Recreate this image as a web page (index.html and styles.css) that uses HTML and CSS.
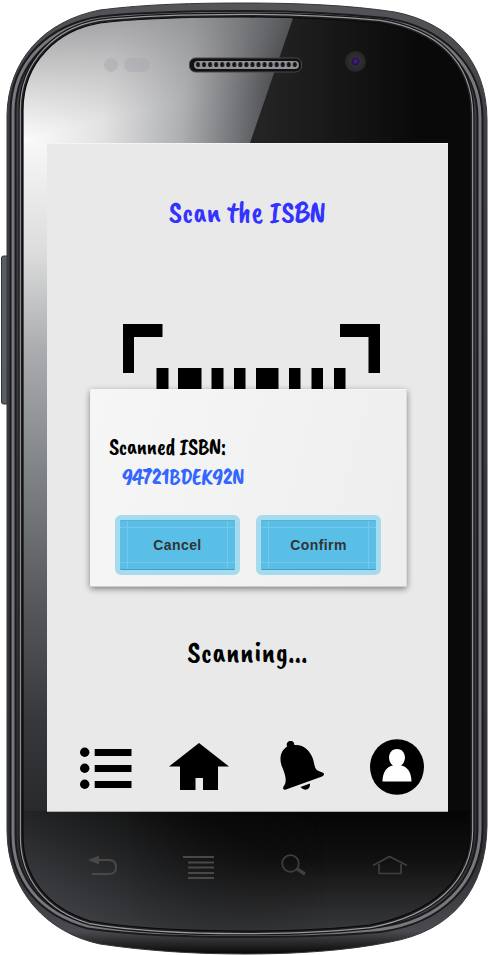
FILE: index.html
```html
<!DOCTYPE html>
<html lang="en">
<head>
<meta charset="utf-8">
<title>Scan the ISBN</title>
<link rel="stylesheet" href="styles.css">
</head>
<body>
<main class="phone">
  <svg class="shell" viewBox="0 0 490 955" aria-hidden="true">
    <defs>
      <linearGradient id="shine" x1="23" y1="130" x2="285" y2="155" gradientUnits="userSpaceOnUse">
        <stop offset="0" stop-color="#fcfcfc"/><stop offset=".3" stop-color="#e2e2e3"/><stop offset=".6" stop-color="#aeafb1"/><stop offset=".86" stop-color="#626468"/><stop offset="1" stop-color="#3c3d41"/>
      </linearGradient>
      <linearGradient id="topShade" x1="120" y1="10" x2="145" y2="110" gradientUnits="userSpaceOnUse">
        <stop offset="0" stop-color="#707174" stop-opacity=".6"/><stop offset="1" stop-color="#888" stop-opacity="0"/>
      </linearGradient>
      <linearGradient id="left" x1="0" y1="143" x2="0" y2="830" gradientUnits="userSpaceOnUse">
        <stop offset="0" stop-color="#f7f7f7"/><stop offset=".16" stop-color="#dcdcdc"/><stop offset=".3" stop-color="#aaacaf"/><stop offset=".48" stop-color="#808386"/><stop offset=".66" stop-color="#585a5d"/><stop offset=".84" stop-color="#37383c"/><stop offset=".98" stop-color="#27282a"/>
      </linearGradient>
      <linearGradient id="base" x1="90" y1="935" x2="155" y2="795" gradientUnits="userSpaceOnUse">
        <stop offset="0" stop-color="#414347"/><stop offset=".5" stop-color="#252628"/><stop offset="1" stop-color="#0c0c0c"/>
      </linearGradient>
      <linearGradient id="baseRight" x1="0" y1="811" x2="0" y2="931" gradientUnits="userSpaceOnUse">
        <stop offset="0" stop-color="#050505"/><stop offset=".4" stop-color="#101010"/><stop offset="1" stop-color="#38393b"/>
      </linearGradient>
      <linearGradient id="dark" x1="260" y1="0" x2="420" y2="0" gradientUnits="userSpaceOnUse">
        <stop offset="0" stop-color="#242424"/><stop offset="1" stop-color="#090909"/>
      </linearGradient>
      <linearGradient id="edge" x1="0" y1="0" x2="0" y2="955" gradientUnits="userSpaceOnUse">
        <stop offset="0" stop-color="#55565a"/><stop offset=".1" stop-color="#424246"/><stop offset=".9" stop-color="#303034"/><stop offset=".975" stop-color="#4a4a50"/><stop offset="1" stop-color="#050505"/>
      </linearGradient>
      <linearGradient id="reveal" x1="130" y1="0" x2="330" y2="0" gradientUnits="userSpaceOnUse">
        <stop offset="0" stop-color="#fff" stop-opacity="0"/><stop offset="1" stop-color="#fff"/>
      </linearGradient>
      <mask id="rightMask" maskUnits="userSpaceOnUse" x="0" y="800" width="490" height="155"><path d="M0 800H490V955H0Z" fill="url(#reveal)"/></mask>
      <radialGradient id="lens"><stop offset="0" stop-color="#4920a0"/><stop offset=".3" stop-color="#231544"/><stop offset=".45" stop-color="#303032"/><stop offset="1" stop-color="#252526"/></radialGradient>
      <pattern id="holes" x="195" y="60" width="6.05" height="9" patternUnits="userSpaceOnUse">
        <rect width="6.05" height="9" fill="#929296"/><ellipse cx="3" cy="4.5" rx="2" ry="2.6" fill="#151517"/>
      </pattern>
      <path id="glass" d="M23 110C23 62 58 30 100 23C142 18 195 17 245 17C295 17 338 19 380 23C434 32 470 62 470 115V830C470 880 432 913 370 925C325 930 285 931 245 931C185 931 130 928 90 921C48 908 23 878 23 836Z"/>
      <path id="rim" d="M13 112C13 60 52 27 100 19C145 14 195 13.500 245 13.500C297 13.500 340 16 385 20.500C440 29 480 66 480 118V830C479 884 440 921 380 929.500C330 934 285 934.500 245 934.500C185 934.500 130 932 88 926C40 913 13 880 13 834Z"/>
      <clipPath id="glassClip"><use href="#glass"/></clipPath>
    </defs>
    <rect x="1.5" y="256" width="8" height="148" rx="2" fill="#566064" stroke="#303639"/>
    <path d="M7 115C8 61 43 21 100 10C147 4 195 3 245 3C297 3 349 5 395 12C450 23 487 60 487 120V826C486 890 452 931 390 942C345 951 295 954 245 954C195 954 147 951 100 944C48 933 7 892 7 830Z" fill="url(#edge)" stroke="#38383b" stroke-width="1"/>
    <g fill="none">
      <use href="#rim" stroke="#1b1b1e" stroke-width="7"/>
      <use href="#rim" stroke="#77777d" stroke-width="3"/>
      <use href="#glass" stroke="#161618" stroke-width="9"/>
      <use href="#glass" stroke="#9a9a9f" stroke-width="6.500"/>
      <use href="#glass" stroke="#202023" stroke-width="4.200"/>
    </g>
    <g clip-path="url(#glassClip)">
      <path d="M0 0H490V955H0Z" fill="url(#dark)"/>
      <path d="M0 0H297L293 18L250 143V180H0Z" fill="url(#shine)"/>
      <path d="M0 0H297L293 18L250 143H0Z" fill="url(#topShade)"/>
      <path d="M20 143H50V830H20Z" fill="url(#left)"/>
      <path d="M20 811H475V940H20Z" fill="url(#base)"/>
      <path d="M20 811H475V940H20Z" fill="url(#baseRight)" mask="url(#rightMask)"/>
    </g>
    <use href="#glass" fill="none" stroke="#09090a" stroke-width="1.200"/>
    <g fill="#a9a9b2" opacity=".5"><circle cx="111" cy="65" r="7"/><rect x="124" y="58" width="26" height="14" rx="7"/></g>
    <rect x="189.500" y="58" width="112" height="14" rx="6" fill="#111113" stroke="#49494d"/>
    <rect x="194" y="61" width="105" height="8" rx="4" fill="url(#holes)"/>
    <circle cx="355.500" cy="61.500" r="10.500" fill="url(#lens)"/>
    <g fill="none" stroke="#4b4745" stroke-width="2">
      <path d="M98 860H109Q116 860 116 867Q116 874 109 874H92"/>
      <path d="M88 860L99 855.500V864.500Z" fill="#4b4745" stroke="none"/>
      <path d="M183 857H214M188 862.500H214M188 867.500H214M188 873H214M188 878H214"/>
    </g>
    <g fill="none" stroke="#3f3f40" stroke-width="1.700">
      <circle cx="290.500" cy="863.500" r="8.300"/><path d="M297 869L305 874" stroke-width="3.300"/>
      <path d="M373 865.500L389.500 856.500L407 865.500M379 864V873.500H401V864"/>
    </g>
  </svg>

  <section class="screen">
    <h1 class="title">Scan the ISBN</h1>
    <svg class="barcode" viewBox="0 0 257 68" aria-hidden="true">
      <path d="M0 0H39.500V13H11V49H0ZM217 0H257V49H245.500V13H217Z"/>
      <path d="M33.500 44h12v24h-12zM55 44h23.500v24H55zM88.500 44h12v24h-12zM111 44h11.500v24H111zM133 44h22.500v24H133zM166 44h11.500v24H166zM188.500 44h11.500v24h-11.500zM211 44h11.500v24H211z"/>
    </svg>
    <div class="dialog" role="dialog">
      <p class="label">Scanned ISBN:</p>
      <p class="code">94721BDEK92N</p>
      <div class="actions">
        <button class="button">Cancel</button>
        <button class="button">Confirm</button>
      </div>
    </div>
    <p class="status">Scanning...</p>
    <nav class="nav">
      <svg class="list" viewBox="0 0 52 43"><circle cx="4.700" cy="5.200" r="4.700"/><circle cx="4.700" cy="21.200" r="4.700"/><circle cx="4.700" cy="37.200" r="4.700"/><path d="M14.700 2h36.800v7H14.700zM14.700 18h36.800v7H14.700zM14.700 34h36.800v7H14.700z"/></svg>
      <svg class="home" viewBox="0 0 60 47"><path d="M30 0L60 23.500H49V47H34V35H26.500V47H11V23.500H0Z"/></svg>
      <svg class="bell" viewBox="0 0 46 50"><path d="M7.200 5.500A3.800 3.800 0 1 1 14.300 4C23 3 30 9 33 18C35 26 35 27.500 37.500 29.500L43.500 32Q45 34 42 35.500L6 48.500Q2 49.500 3.500 45.500C7 41 6 36 3 28C-2 18 1 9 7.200 5.500Z"/><path d="M20.500 46L30 42.500C30.500 48.500 25 51 20.500 46Z"/></svg>
      <svg class="user" viewBox="0 0 54 56"><ellipse cx="27" cy="28" rx="27" ry="27.800"/><path d="M12.500 42.500C12.500 33 17 27.500 23 26.500C17 23 17.500 10 27 10C36.500 10 37 23 31 26.500C37 27.500 41.500 33 41.500 42.500Z" fill="#fff"/></svg>
    </nav>
  </section>
</main>
</body>
</html>
```
FILE: styles.css
```css
* { box-sizing: border-box; }
body { margin: 0; background: #fff; }
.phone { position: relative; width: 490px; height: 955px; overflow: hidden; padding: 143px 42px 143px 47px; }
.shell { position: absolute; inset: 0; width: 490px; height: 955px; }
.screen {
  position: relative;
  display: flex;
  flex-direction: column;
  width: 401px;
  height: 669px;
  background: #e9e9e9;
  border-top: 1px solid #f4f4f4;
  border-bottom: 1px solid #aaa;
}
.title, .label, .code, .status {
  margin: 0;
  font-family: "Caveat Brush", "Comic Neue", Lato, sans-serif;
  font-weight: 400;
  color: #000;
  white-space: nowrap;
}
.title { height: 40px; margin-top: 48px; font-size: 31px; line-height: 40px; text-align: center; color: #33f; }
.barcode { width: 257px; height: 68px; margin: 92px 0 0 76px; flex: none; }
.dialog {
  width: 317px;
  height: 198px;
  margin: -3px 0 0 43px;
  padding: 41px 26px 12px 18px;
  flex: none;
  background: linear-gradient(105deg, #f6f6f6, #eee);
  border: 1px solid #ddd;
  border-color: #f6f6f6 #ddd #ccc #f2f2f2;
  border-radius: 2px;
  box-shadow: 0 2px 6px rgba(0, 0, 0, .45);
}
.label, .code { height: 30px; font-size: 24px; line-height: 30px; letter-spacing: -.6px; }
.code { margin-left: 13px; color: #36f; }
.actions { display: flex; gap: 16px; margin: 24px 0 0 6px; }
.button {
  width: 125px;
  height: 60px;
  padding: 0;
  flex: none;
  border: 5px solid #a6dbed;
  border-radius: 6px;
  color: #333;
  background:
    linear-gradient(#72c9eb, #72c9eb) 7px 0 / 1px 100% no-repeat,
    linear-gradient(#72c9eb, #72c9eb) 107px 0 / 1px 100% no-repeat,
    linear-gradient(#72c9eb, #72c9eb) 0 7px / 100% 1px no-repeat,
    linear-gradient(#72c9eb, #72c9eb) 0 42px / 100% 1px no-repeat,
    #59bfe7;
  box-shadow: inset 0 -1px #409fc2, inset 0 1px #4fb5dc;
  font: 700 14px/20px "Liberation Sans", sans-serif;
  letter-spacing: .4px;
}
.status { height: 40px; margin-top: 45px; font-size: 31px; line-height: 40px; letter-spacing: .3px; text-align: center; }
.nav { display: flex; align-items: flex-start; margin-top: 67px; padding-left: 33px; }
.nav svg { flex: none; }
.list { width: 52px; height: 43px; margin-top: 8px; }
.home { width: 60px; height: 47px; margin: 4px 0 0 37px; }
.bell { width: 46px; height: 50px; margin: 2px 0 0 51px; }
.user { width: 54px; height: 56px; margin-left: 44px; }
```
